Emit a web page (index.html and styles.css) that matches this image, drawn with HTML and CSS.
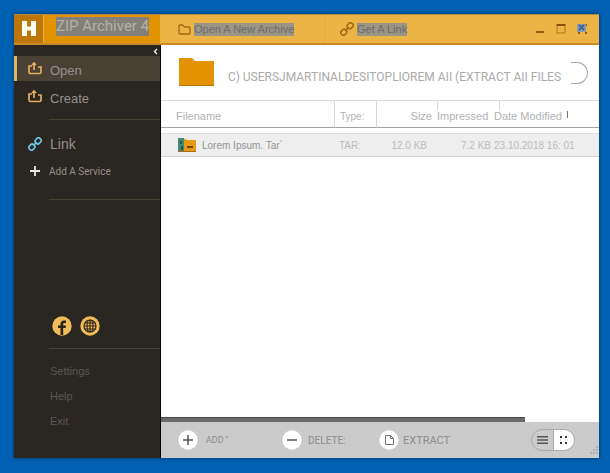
FILE: index.html
```html
<!DOCTYPE html>
<html lang="en">
<head>
<meta charset="utf-8">
<title>ZIP Archiver 4</title>
<link rel="stylesheet" href="styles.css">
</head>
<body>
<div class="window">
  <header class="titlebar">
    <div class="logo"><svg width="16" height="16" viewBox="0 0 16 16" aria-hidden="true"><path d="M1 0h5v5.500h4V0h5v15h-5V9.500H6V15H1z" fill="#fffdf2"/></svg></div>
    <h1 class="brand"><span class="mark">ZIP Archiver 4</span></h1>
    <nav class="top-actions">
      <button class="top-action top-open"><svg width="13" height="11" viewBox="0 0 13 11" fill="none" stroke="#a56410" stroke-width="1.3" aria-hidden="true"><path d="M1 9V2q0-1 1-1h2.500l2 2H11q1 0 1 1v5q0 1-1 1H2q-1 0-1-1z"/></svg><span class="mark">Open A New Archive</span></button>
      <button class="top-action top-link"><svg width="14" height="14" viewBox="0 0 14 14" fill="none" stroke="#a56410" stroke-width="1.500" aria-hidden="true"><g transform="rotate(-45 7 7)"><rect x="-.5" y="4.500" width="6" height="5" rx="2"/><rect x="8.500" y="4.500" width="6" height="5" rx="2"/><path d="M4.500 7h5"/></g></svg><span class="mark">Get A Link</span></button>
    </nav>
    <div class="window-controls">
      <button aria-label="Minimize"><svg width="10" height="10" viewBox="0 0 10 10"><path d="M1 7h8v2H1z" fill="#9a5a0c"/></svg></button>
      <button aria-label="Maximize"><svg width="10" height="10" viewBox="0 0 10 10" fill="none" stroke="#b8741a"><path d="M1 1.500h8v7.500H1z"/><path d="M.5 1h9" stroke="#8c5008" stroke-width="2"/></svg></button>
      <button class="close" aria-label="Close"><svg width="10" height="10" viewBox="0 0 10 10"><path d="M0 0h9v8H0z" fill="#8b98ab"/><path d="M2 1l5 5M7 1L2 6" stroke="#3b6290" stroke-width="1.800"/><path d="M1 8h2v2H1zM8 8h2v2H8zM9 0h1v2H9z" fill="#9a5a0c"/></svg></button>
    </div>
  </header>
  <div class="body">
    <aside class="sidebar">
      <button class="collapse" aria-label="Collapse sidebar"><svg width="5" height="7" viewBox="0 0 5 7" fill="none" stroke="#f3eee4" stroke-width="1.400"><path d="M4 1L1.500 3.500 4 6"/></svg></button>
      <nav class="group files">
        <a class="item active" href="#open"><svg width="14" height="13" viewBox="0 0 14 13" fill="none" stroke="#e5ae5c" stroke-width="1.700" aria-hidden="true"><path d="M4 4H1v6q0 1.500 1.500 1.500h9q1.500 0 1.500-1.500V5h-3M6 8V1M4 3l2-2 2 2"/></svg>Open</a>
        <a class="item" href="#create"><svg width="14" height="13" viewBox="0 0 14 13" fill="none" stroke="#e5ae5c" stroke-width="1.700" aria-hidden="true"><path d="M4 4H1v6q0 1.500 1.500 1.500h9q1.500 0 1.500-1.500V5h-3M6 8V1M4 3l2-2 2 2"/></svg>Create</a>
      </nav>
      <nav class="group services">
        <a class="item link" href="#link"><svg width="14" height="14" viewBox="0 0 14 14" fill="none" stroke="#6cc3e2" stroke-width="1.700" aria-hidden="true"><g transform="rotate(-45 7 7)"><rect x="-.5" y="4.500" width="6" height="5" rx="2"/><rect x="8.500" y="4.500" width="6" height="5" rx="2"/><path d="M4.500 7h5"/></g></svg>Link</a>
        <a class="item add" href="#service"><svg width="14" height="12" viewBox="0 0 14 12" aria-hidden="true"><path d="M7 1v10M2 6h10" stroke="#eee9df" stroke-width="1.800"/></svg>Add A Service</a>
      </nav>
      <div class="social">
        <a href="#facebook" aria-label="Facebook"><svg width="20" height="20" viewBox="0 0 20 20"><circle cx="10" cy="10" r="9.700" fill="#f2bb59"/><path d="M8.500 19v-7H6V9.500h2.500V8q0-3.500 3.500-3.500h2V7h-1.500Q11.200 7 11.200 8.300v1.200H14l-.4 2.500h-2.400v7z" fill="#2a231b"/></svg></a>
        <a href="#web" aria-label="Website"><svg width="20" height="20" viewBox="0 0 20 20"><circle cx="10" cy="10" r="9.700" fill="#f2bb59"/><g fill="none" stroke="#33291b" stroke-width="1.200"><circle cx="10" cy="10" r="6"/><ellipse cx="10" cy="10" rx="3" ry="6"/><path d="M10 4v12M4 10h12M5 7h10M5 13h10"/></g></svg></a>
      </div>
      <nav class="group footer-links">
        <a href="#settings">Settings</a>
        <a href="#help">Help</a>
        <a href="#exit">Exit</a>
      </nav>
    </aside>
    <main class="content">
      <div class="location">
        <svg class="folder" width="36" height="29" viewBox="0 0 36 29" aria-hidden="true"><path d="M0 0h13l3 3h19v25H0z" fill="#e39300"/><path d="M0 27h35v1H0z" fill="#b87609"/></svg>
        <p class="path">C) USERSJMARTINALDESITOPLIOREM AII (EXTRACT AII FILES</p>
        <span class="path-end"></span>
      </div>
      <table class="files-table">
        <colgroup><col><col class="c-type"><col class="c-size"><col class="c-packed"><col class="c-date"></colgroup>
        <thead><tr><th class="name">Filename</th><th class="type">Type:</th><th class="size">Size</th><th class="packed">Impressed</th><th class="date">Date Modified<span class="sort"></span></th></tr></thead>
        <tbody><tr><td class="name"><span class="file"><svg width="18" height="15" viewBox="0 0 18 15" aria-hidden="true"><path d="M0 1h7l2 1h9v12H0z" fill="#e79a12"/><path d="M0 0h6v14H0z" fill="#478a72"/><path d="M2 3h2v3H2zM3 8h2v4H3z" fill="#1e5954"/><path d="M0 13h18v1H0z" fill="#a86b11"/><path d="M9 8h6v2H9z" fill="#70410d"/></svg>Lorem Ipsum. Tar´</span></td><td class="type">TAR:</td><td class="size">12.0 KB</td><td class="packed">7.2 KB</td><td class="date">23.10.2018 16: 01</td></tr></tbody>
      </table>
      <div class="scroll"><div class="thumb"></div></div>
      <footer class="toolbar">
        <button class="tool tool-add"><svg width="20" height="20" viewBox="0 0 20 20" aria-hidden="true"><circle cx="10" cy="10" r="9.700" fill="#fff"/><path d="M10 5v10M5 10h10" stroke="#555" stroke-width="1.500"/></svg><span>ADD <span class="tick">'</span></span></button>
        <button class="tool tool-delete"><svg width="20" height="20" viewBox="0 0 20 20" aria-hidden="true"><circle cx="10" cy="10" r="9.700" fill="#fff"/><path d="M5 10h10" stroke="#555" stroke-width="1.500"/></svg>DELETE:</button>
        <button class="tool tool-extract"><svg width="20" height="20" viewBox="0 0 20 20" aria-hidden="true"><circle cx="10" cy="10" r="9.700" fill="#fff"/><path d="M6.500 5.500h5l3 3v6h-8zM11.500 5.500v3h3" fill="none" stroke="#777"/></svg>EXTRACT</button>
        <div class="views">
          <button aria-label="List view"><svg width="11" height="10" viewBox="0 0 11 10"><path d="M0 1h11v1.500H0zM0 4.300h11v1.500H0zM0 7.600h11v1.500H0z" fill="#555"/></svg></button>
          <button class="selected" aria-label="Grid view"><svg width="8" height="10" viewBox="0 0 8 10"><path d="M0 1h2v2H0zM5 1h2v2H5zM0 7h2v2H0zM5 7h2v2H5z" fill="#333"/></svg></button>
        </div>
        <svg class="grip" width="8" height="8" viewBox="0 0 8 8" aria-hidden="true"><path d="M6 0h2v2H6zM6 3h2v2H6zM6 6h2v2H6zM3 3h2v2H3zM3 6h2v2H3zM0 6h2v2H0z" fill="#b3afab"/></svg>
      </footer>
    </main>
  </div>
</div>
</body>
</html>
```
FILE: styles.css
```css
* { box-sizing: border-box; }
body {
  margin: 0;
  min-height: 100vh;
  padding: 14px 11px 15px 14px;
  display: flex;
  background: #0061b3;
  font-family: "Liberation Sans", Arial, sans-serif;
  font-size: 11px;
}
button {
  border: 0;
  padding: 0;
  background: none;
  font: inherit;
  color: inherit;
}
a { color: inherit; text-decoration: none; }
svg { display: block; flex: none; }
.window {
  flex: 1;
  min-width: 0;
  display: flex;
  flex-direction: column;
  background: #fff;
  box-shadow: 0 0 4px #00315f;
}
.titlebar {
  display: flex;
  height: 31px;
  background: #ecb345;
  border-top: 1px solid #b08a3f;
  border-bottom: 2px solid #c78a26;
}
.logo {
  width: 29px;
  display: grid;
  place-items: center;
  background: #bd760c;
}
.brand {
  width: 117px;
  margin: 0;
  padding: 2px 0 0 12px;
  border-left: 1px solid #e9ad45;
  background: #e29300;
  font: 15px/19px Roboto, Arial, sans-serif;
  color: #b5b1a7;
  white-space: nowrap;
}
.mark { display: inline-block; background: #828078; }
.top-actions { flex: 1; display: flex; }
.top-action {
  display: flex;
  align-items: center;
  gap: 3px;
  color: #686b70;
  line-height: 13px;
  white-space: nowrap;
}
.top-action .mark { background: #9b9584; }
.top-open { width: 165px; padding-left: 18px; border-right: 1px solid #e2aa42; }
.top-link { padding-left: 15px; }
.window-controls {
  display: flex;
  align-items: center;
  gap: 11px;
  padding-right: 12px;
}
.body { flex: 1; display: flex; }
.sidebar {
  width: 147px;
  flex: none;
  display: flex;
  flex-direction: column;
  background: #2a2622;
  border-right: 1px solid #050505;
  color: #96918b;
}
.collapse { align-self: flex-end; padding: 3px 2px 1px; }
.group { display: flex; flex-direction: column; }
.files { gap: 3px; }
.item {
  height: 25px;
  display: flex;
  align-items: center;
  gap: 8px;
  padding: 3px 0 0 14px;
  font-size: 13px;
}
.item svg { margin-top: -3px; }
.files .active {
  border-left: 3px solid #d9b768;
  padding-left: 11px;
  background: #4a4135;
}
.services { margin-top: 10px; }
.services::before, .services::after, .footer-links::before {
  content: "";
  height: 1px;
  margin-left: 35px;
  background: #48402e;
}
.services .item { height: 27px; padding-top: 1px; }
.services .item svg { margin-top: 0; }
.services .link { margin-top: 10px; font-size: 14px; }
.services::after { margin-top: 15px; }
.services .add { gap: 7px; font: 10px Roboto, Arial, sans-serif; }
.social {
  display: flex;
  gap: 8px;
  margin-top: auto;
  padding: 0 0 12px 38px;
}
.footer-links {
  padding-bottom: 24px;
  line-height: 25px;
  color: #5b5753;
}
.footer-links::before { margin-bottom: 10px; }
.footer-links a { padding-left: 36px; }
.content {
  flex: 1;
  min-width: 0;
  display: flex;
  flex-direction: column;
}
.location {
  height: 56px;
  display: flex;
  align-items: center;
  padding: 0 11px 0 18px;
  border-bottom: 1px solid #d8d8d8;
}
.path {
  flex: 1;
  min-width: 0;
  margin: 8px 0 0 13px;
  font: 12px/20px Roboto, Arial, sans-serif;
  color: #aaa;
  white-space: nowrap;
}
.path-end {
  width: 17px;
  height: 22px;
  border: 1px solid #aaa;
  border-left: 0;
  border-radius: 0 11px 11px 0;
}
.files-table {
  width: 100%;
  table-layout: fixed;
  border-collapse: separate;
  border-spacing: 0;
  font-size: 11px;
  white-space: nowrap;
}
.c-type { width: 43px; }
.c-size { width: 60px; }
.c-packed { width: 57px; }
.c-date { width: 105px; }
th, td {
  padding: 0;
  text-align: left;
  font-weight: normal;
  color: #b2b2b2;
}
th { height: 27px; padding-top: 4px; border-bottom: 1px solid #a3a3a3; }
td {
  height: 24px;
  color: #bbb;
  background: #eee;
  border-top: 1px solid #ddd;
  border-bottom: 1px solid #d2d2d2;
}
tbody::before { content: ""; display: block; height: 5px; }
th.name { padding-left: 15px; }
td.name { padding-left: 17px; color: #959595; font-size: 10px; }
.file { display: flex; align-items: center; gap: 6px; }
.type { padding-left: 5px; }
th.type { border-left: 1px solid #d8d8d8; border-right: 1px solid #d8d8d8; font-size: 10px; }
td.type, td.size, td.packed, td.date { font-size: 10px; }
th.size { text-align: right; padding-right: 5px; }
td.size { text-align: right; padding-right: 10px; }
th.packed {
  background: linear-gradient(#d8d8d8, #d8d8d8) 0 0 / 1px 9px no-repeat;
}
td.packed { text-align: right; padding-right: 3px; }
th.date {
  background: linear-gradient(#d8d8d8, #d8d8d8) 5px 0 / 1px 9px no-repeat;
}
.sort {
  display: inline-block;
  width: 1px;
  height: 7px;
  margin-left: 5px;
  vertical-align: 2px;
  background: #777;
}
.scroll { margin-top: auto; background: #fff; }
.thumb {
  width: 83%;
  height: 5px;
  background: #6a6a6a;
  border-top: 1px solid #484848;
}
.toolbar {
  height: 36px;
  display: flex;
  align-items: center;
  background: #cbcbcb;
  padding-left: 17px;
  font-family: Roboto, Arial, sans-serif;
  font-size: 10px;
  color: #8b8b8b;
}
.tool { display: flex; align-items: center; gap: 6px; }
.tool-add { width: 104px; gap: 8px; font-size: 9px; }
.tick { color: #555; }
.tool-delete { width: 97px; }
.tool-extract { gap: 4px; font-size: 11px; }
.views {
  display: flex;
  margin-left: auto;
  border: 1px solid #aaa;
  border-radius: 11px;
  overflow: hidden;
}
.views button {
  width: 21px;
  height: 20px;
  display: grid;
  place-items: center;
}
.views .selected { background: #fff; border-left: 1px solid #aaa; }
.grip { align-self: flex-end; margin: 0 1px 4px 15px; }
```
